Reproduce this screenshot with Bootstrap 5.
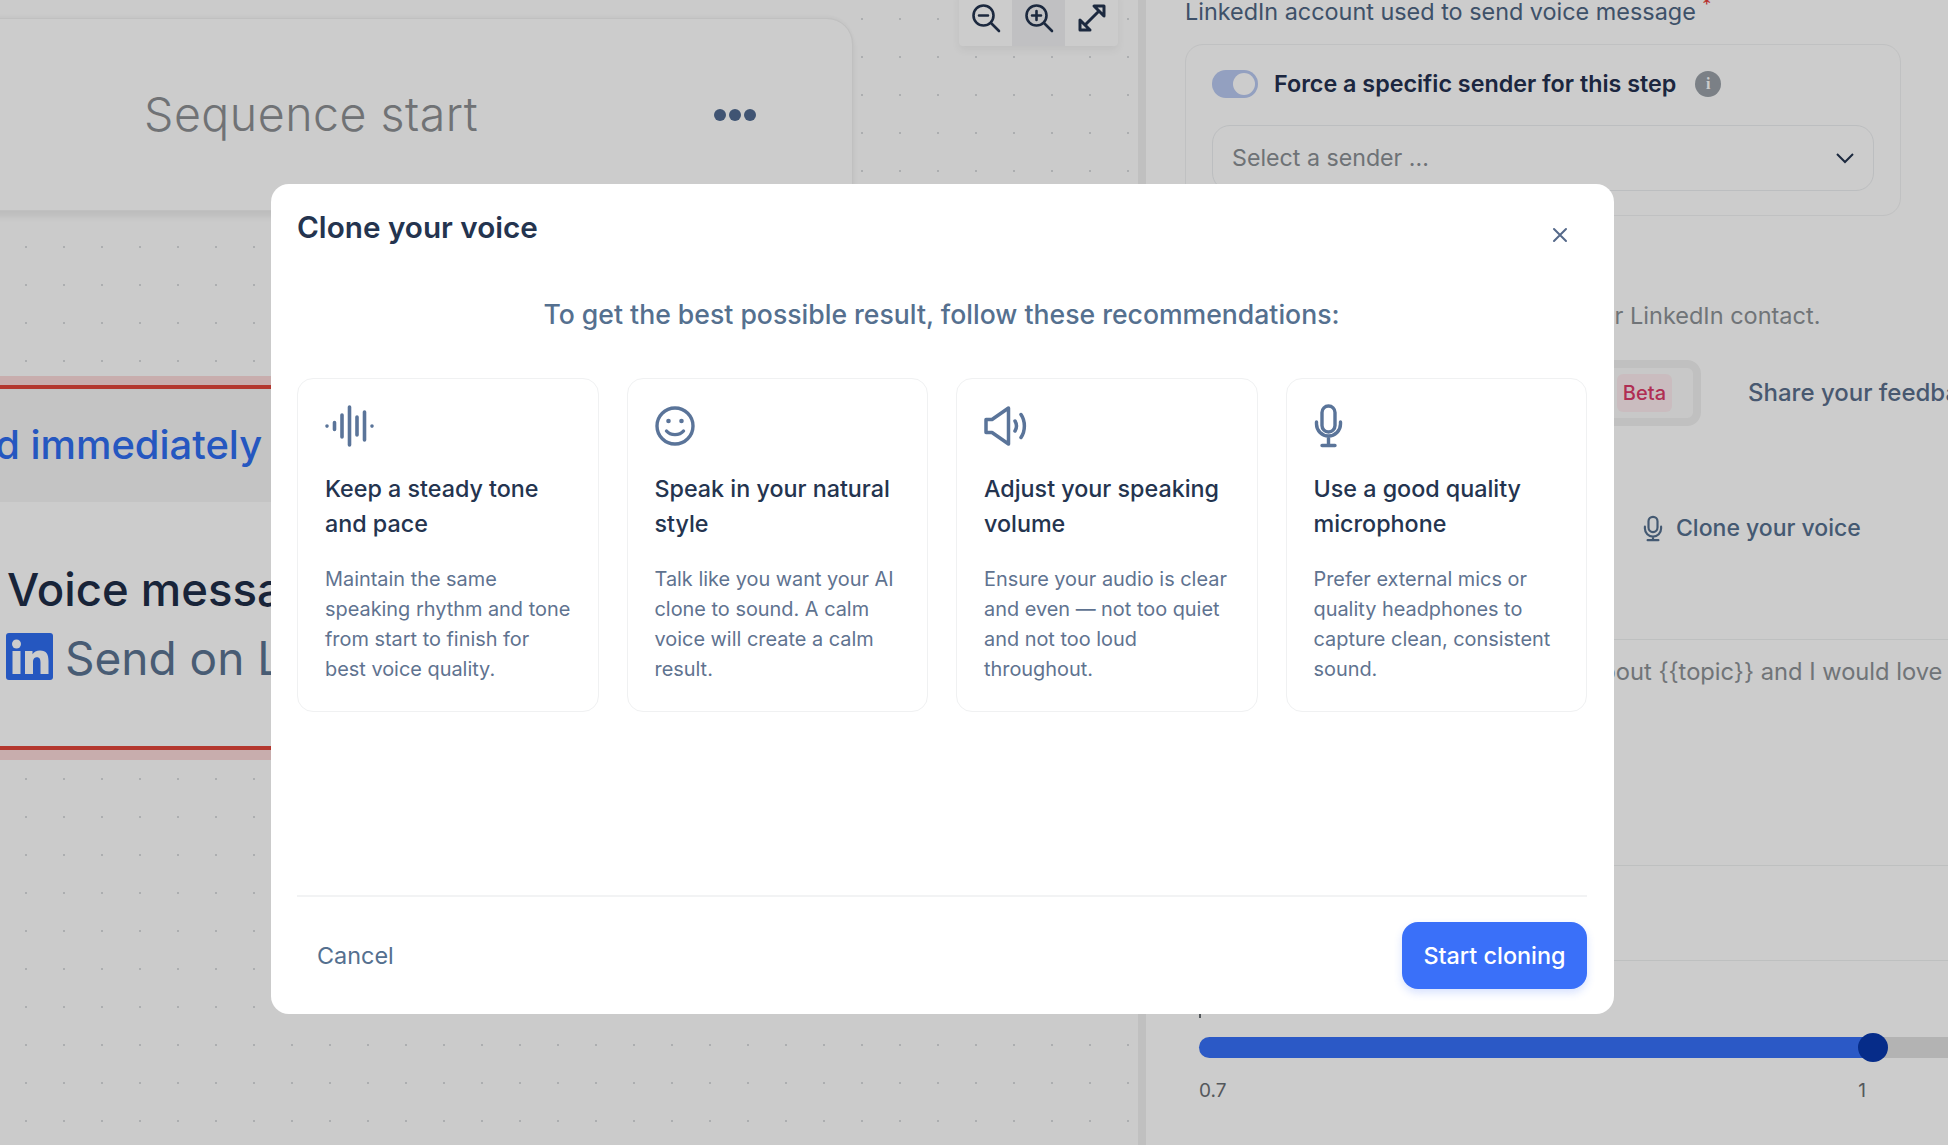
<!DOCTYPE html>
<html lang="en">
<head>
<meta charset="utf-8">
<title>Clone your voice</title>
<link href="https://cdn.jsdelivr.net/npm/bootstrap@5.3.0/dist/css/bootstrap.min.css" rel="stylesheet">
<style>
html,body{height:100%;overflow:hidden}
body{font-family:Inter,"Noto Sans",sans-serif;background:#fff;color:#24344f}
.app-shell{height:1145px;width:1948px;overflow:hidden}
.flow-canvas{width:1146px;flex:none;position:relative;overflow:hidden;background-color:#fefefe;background-image:radial-gradient(circle,#d8dadd 1px,transparent 1.4px);background-size:38px 38px;background-position:7px 0;border-right:8px solid #f0f0f0}
.node-start{position:absolute;left:-40px;top:18px;width:893px;height:193px;background:#fff;border:1px solid #f0f0f0;border-radius:0 26px 26px 0;box-shadow:0 6px 6px rgba(0,0,0,.07),0 -2px 3px rgba(0,0,0,.03);display:flex;align-items:center;padding-left:183px;justify-content:space-between;padding-right:96px}
.node-start-title{font-size:46.500px;font-weight:300;color:#8c8f93;letter-spacing:.5px}
.dots{display:flex;gap:3px}
.dots i{width:12px;height:12px;border-radius:50%;background:#506a90;display:block}
.zoom-bar{position:absolute;left:959px;top:-10px;width:159px;height:56px;background:#fff;display:flex;box-shadow:0 4px 8px rgba(0,0,0,.06);border-radius:4px;overflow:hidden}
.zoom-bar span{flex:1;display:flex;align-items:center;justify-content:center;color:#24344f}
.zoom-bar span.is-on{background:#f0f1f3}
.node-voice{position:absolute;left:-10px;top:385px;width:1000px;height:365px;border-top:4px solid #e2453a;border-bottom:4px solid #e2453a;background:#fff}
.band-top,.band-bottom{position:absolute;left:-10px;width:1000px;background:#fbd9d9}
.band-top{top:376px;height:9px}.band-bottom{top:750px;height:10px}
.immediate-strip{background:#f6f6f6;height:113px;display:flex;align-items:center;font-size:39.900px;font-weight:500;color:#2f6df0;white-space:nowrap;margin-left:-68px;padding-bottom:2px}
.voice-title{position:absolute;left:17px;top:167px;font-size:45.500px;font-weight:500;color:#1f2d48;white-space:nowrap}
.voice-sub{position:absolute;left:16px;top:243px;font-size:46px;color:#5a7492;white-space:nowrap;display:flex;align-items:center;gap:12px;line-height:1}
.voice-sub span{margin-top:3px}
.side-panel{flex:1;padding:0 0 0 39px;background:#fff;min-width:0}
.side-label{font-size:23.400px;color:#4e6684;line-height:26px;margin-top:-1px;white-space:nowrap}
.side-label sup{color:#e53935;font-size:18px}
.sender-box{width:716px;height:172px;border:1px solid #f1f2f3;border-radius:18px;margin-top:19px;padding:24px 26px}
.force-row{display:flex;align-items:center;gap:16px;font-size:23.300px;font-weight:600;color:#24304f;line-height:30px}
.switch-track{width:46px;height:28px;border-radius:14px;background:#b8c8f0;display:flex;justify-content:flex-end;align-items:center;padding-right:3px}
.switch-track i{width:22px;height:22px;border-radius:50%;background:#fff;display:block}
.info-dot{width:26px;height:26px;border-radius:50%;background:#9aa1a8;color:#fff;font-size:16px;font-weight:700;display:flex;align-items:center;justify-content:center;margin-left:3px;font-family:"Liberation Serif",serif}
.sender-select{margin-top:26px;width:662px;height:66px;border:1px solid #eceef0;border-radius:18px;display:flex;align-items:center;justify-content:space-between;padding:0 18px 0 19px;font-size:23.200px;color:#8a8f94}
.contact-note{font-size:23.500px;color:#8d9296;margin-top:85px;padding-left:124px;line-height:30px;white-space:nowrap}
.beta-row{display:flex;align-items:center;margin-top:29px}
.beta-box{margin-left:315px;width:201px;height:66px;flex:none;background:#fbfbfb;border:8px solid #f1f1f1;border-radius:14px;display:flex;align-items:center;justify-content:flex-end;padding-right:21px}
.beta-tag{background:#fdecef;color:#dc3a68;font-size:20px;font-weight:500;padding:4px 6px;border-radius:6px}
.feedback-link{font-size:24px;font-weight:500;color:#5a6f8c;margin-left:47px;white-space:nowrap}
.clone-link{font-size:23px;font-weight:500;color:#55708f;display:flex;align-items:center;gap:13px;margin-top:85px;padding-left:458px;white-space:nowrap}
.voice-text{border-top:1px solid #eef0f1;margin-top:93px;padding:14px 0 0 0;font-size:23.700px;color:#8d9296;height:226px;white-space:nowrap;text-indent:403px}
.side-rule{border-top:1px solid #eef0f1;height:95px}
.side-rule-last{height:50px}
.slider-row{padding-left:14px}
.slider-line{height:21px;position:relative;background:#e0e0e0;border-radius:11px 0 0 11px}
.slider-fill{position:absolute;left:0;top:0;bottom:0;width:674px;background:#3670f8;border-radius:11px 0 0 11px}
.slider-knob{position:absolute;left:659px;top:-4px;width:30px;height:29px;border-radius:50%;background:#0838ac}
.slider-scale{display:flex;font-size:19px;line-height:28px;color:#6a6e73;margin-top:19px;width:667px;justify-content:space-between}
.slider-tick{width:2px;height:8px;background:#6a6e73;margin-bottom:19px}
.dim-layer{position:fixed;inset:0;z-index:1050;background:rgba(0,0,0,.2)}
.voice-modal{position:fixed;left:271px;top:184px;width:1343px;height:830px;z-index:1060;background:#fff;border:0;border-radius:18px;display:flex;flex-direction:column;padding:0 26px 25px}
.voice-modal .modal-header{border:0;padding:20px 0 0;align-items:flex-start;justify-content:space-between}
.modal-heading{font-size:29.700px;font-weight:600;color:#24344f;line-height:46px;margin:0}
.modal-x{background:none;border:0;padding:0;margin:23px 20px 0 0;line-height:0;color:#55698a}
.voice-modal .modal-body{padding:0;flex:1}
.modal-intro{font-size:26.600px;font-weight:500;color:#55708f;text-align:center;margin:0;line-height:34px;padding-top:47px;margin-left:-2px}
.tips{display:grid;grid-template-columns:repeat(4,1fr);gap:28px;margin-top:47px;margin-right:1px}
.tip-card{height:334px;border:1px solid #f0f1f2;border-radius:16px;padding:25px 24px 26px 27px;box-shadow:none}
.tip-icon{height:44px;display:block;color:#5a7499;line-height:0}
.tip-title{font-size:23.300px;font-weight:500;color:#24344f;line-height:35px;margin:23px 0 0}
.tip-text{font-size:19.900px;color:#5f7390;line-height:30px;margin:23px 0 0}
.voice-modal .modal-footer{border:0;border-top:2px solid #f2f3f4;padding:25px 0 0;justify-content:space-between;margin-right:1px}
.voice-modal .modal-footer>*{margin:0}
.btn-cancel{font-size:23.400px;color:#55708f;padding:0 20px;background:none;border:0}
.voice-modal .modal-footer .btn-start{font-size:23.400px;font-weight:500;color:#fff;background:#3a70f9;border:0;border-radius:16px;width:185px;height:67px;box-shadow:0 4px 8px rgba(58,112,249,.2);padding:0}
</style>
</head>
<body>
<div class="app-shell d-flex">
  <section class="flow-canvas">
    <div class="node-start">
      <span class="node-start-title">Sequence start</span>
      <span class="dots"><i></i><i></i><i></i></span>
    </div>
    <div class="zoom-bar">
      <span><svg width="32" height="32" viewBox="0 0 32 32" fill="none" stroke="currentColor" stroke-width="2.600" stroke-linecap="round"><circle cx="13.500" cy="13.500" r="10"/><path d="M9 13.500h9M21 21l8 8"/></svg></span>
      <span class="is-on"><svg width="32" height="32" viewBox="0 0 32 32" fill="none" stroke="currentColor" stroke-width="2.600" stroke-linecap="round"><circle cx="13.500" cy="13.500" r="10"/><path d="M9 13.500h9M13.500 9v9M21 21l8 8"/></svg></span>
      <span><svg width="30" height="30" viewBox="0 0 30 30" fill="none" stroke="currentColor" stroke-width="3" stroke-linejoin="round"><path d="M17 3h10v10zM3 17v10h10zM9 21L21 9"/></svg></span>
    </div>
    <div class="node-voice">
      <div class="immediate-strip">Send immediately</div>
      <div class="voice-title">Voice message</div>
      <div class="voice-sub"><svg width="47" height="47" viewBox="0 0 47 47"><rect width="47" height="47" rx="3" fill="#2f6df0"/><circle cx="10.500" cy="11" r="4.500" fill="#fff"/><rect x="6.500" y="18" width="8" height="23" fill="#fff"/><path d="M19 18h7.500v3.300c1.300-2.200 4-3.900 7.500-3.900 6.500 0 8.500 4 8.500 10.500V41h-8V29.500c0-3-.8-5.200-3.500-5.200-3 0-4 2.200-4 5.200V41h-8z" fill="#fff"/></svg><span>Send on LinkedIn</span></div>
    </div>
    <div class="band-top"></div>
    <div class="band-bottom"></div>
  </section>
  <aside class="side-panel">
    <div class="side-label">LinkedIn account used to send voice message <sup>*</sup></div>
    <div class="sender-box">
      <div class="force-row"><span class="switch-track"><i></i></span><span>Force a specific sender for this step</span><span class="info-dot">i</span></div>
      <div class="sender-select"><span>Select a sender ...</span><svg width="20" height="14" viewBox="0 0 20 14" fill="none" stroke="#24344f" stroke-width="2"><path d="M2 3l8 8 8-8"/></svg></div>
    </div>
    <div class="contact-note">Record a voice note for your LinkedIn contact.</div>
    <div class="beta-row"><div class="beta-box"><span class="beta-tag">Beta</span></div><span class="feedback-link">Share your feedback</span></div>
    <div class="clone-link"><svg width="20" height="27" viewBox="0 0 22 30" fill="none" stroke="currentColor" stroke-width="2.400" stroke-linecap="round"><rect x="6" y="2" width="10" height="17" rx="5"/><path d="M2 13v2a9 9 0 0 0 18 0v-2M11 24v4M5 28h12"/></svg><span>Clone your voice</span></div>
    <div class="voice-text">about {{topic}} and I would love to talk</div>
    <div class="side-rule"></div>
    <div class="side-rule side-rule-last"></div>
    <div class="slider-row">
      <div class="slider-tick"></div>
      <div class="slider-line"><div class="slider-fill"></div><div class="slider-knob"></div></div>
      <div class="slider-scale"><span>0.7</span><span>1</span></div>
    </div>
  </aside>
</div>
<div class="dim-layer"></div>
<div class="modal-content voice-modal">
  <div class="modal-header">
    <h5 class="modal-heading">Clone your voice</h5>
    <button class="modal-x" type="button" aria-label="Close"><svg width="16" height="16" viewBox="0 0 16 16" fill="none" stroke="currentColor" stroke-width="2" stroke-linecap="round"><path d="M2 2l12 12M14 2L2 14"/></svg></button>
  </div>
  <div class="modal-body">
    <p class="modal-intro">To get the best possible result, follow these recommendations:</p>
    <div class="tips">
      <div class="card tip-card">
        <span class="tip-icon"><svg width="50" height="44" viewBox="0 0 50 44" fill="none" stroke="currentColor" stroke-width="3.600" stroke-linecap="round"><path d="M2 22v.1M9.500 18.500v7M17 11v22M24.500 3v38M32 13v18M39.500 8v28M47 22v.1"/></svg></span>
        <h6 class="tip-title">Keep a steady tone and pace</h6>
        <p class="tip-text">Maintain the same speaking rhythm and tone from start to finish for best voice quality.</p>
      </div>
      <div class="card tip-card">
        <span class="tip-icon"><svg width="40" height="44" viewBox="0 0 40 44" fill="none" stroke="currentColor" stroke-width="3.400" stroke-linecap="round"><circle cx="20" cy="22" r="18"/><circle cx="13.500" cy="17" r="2.300" fill="currentColor" stroke="none"/><circle cx="26.500" cy="17" r="2.300" fill="currentColor" stroke="none"/><path d="M11.500 27c4 4.800 13 4.800 17 0"/></svg></span>
        <h6 class="tip-title">Speak in your natural style</h6>
        <p class="tip-text">Talk like you want your AI clone to sound. A calm voice will create a calm result.</p>
      </div>
      <div class="card tip-card">
        <span class="tip-icon"><svg width="44" height="44" viewBox="0 0 44 44" fill="none" stroke="currentColor" stroke-width="3.500" stroke-linecap="round" stroke-linejoin="round"><path d="M2 15.500v13h6l16.500 11.500V4L8 15.500z"/><path d="M31 17c1.800 3 1.800 7 0 10M37 10.500c4.500 6.500 4.500 16.500 0 23"/></svg></span>
        <h6 class="tip-title">Adjust your speaking volume</h6>
        <p class="tip-text">Ensure your audio is clear and even — not too quiet and not too loud throughout.</p>
      </div>
      <div class="card tip-card">
        <span class="tip-icon"><svg width="30" height="44" viewBox="0 0 30 44" fill="none" stroke="currentColor" stroke-width="3.400" stroke-linecap="round"><rect x="8" y="2" width="13" height="26" rx="6.500"/><path d="M2.500 18v2a12 12 0 0 0 24 0v-2M14.500 32v9.500M8 41.500h13"/></svg></span>
        <h6 class="tip-title">Use a good quality microphone</h6>
        <p class="tip-text">Prefer external mics or quality headphones to capture clean, consistent sound.</p>
      </div>
    </div>
  </div>
  <div class="modal-footer">
    <button class="btn btn-cancel" type="button">Cancel</button>
    <button class="btn btn-start" type="button">Start cloning</button>
  </div>
</div>
<script src="https://cdn.jsdelivr.net/npm/bootstrap@5.3.0/dist/js/bootstrap.bundle.min.js"></script>
</body>
</html>
